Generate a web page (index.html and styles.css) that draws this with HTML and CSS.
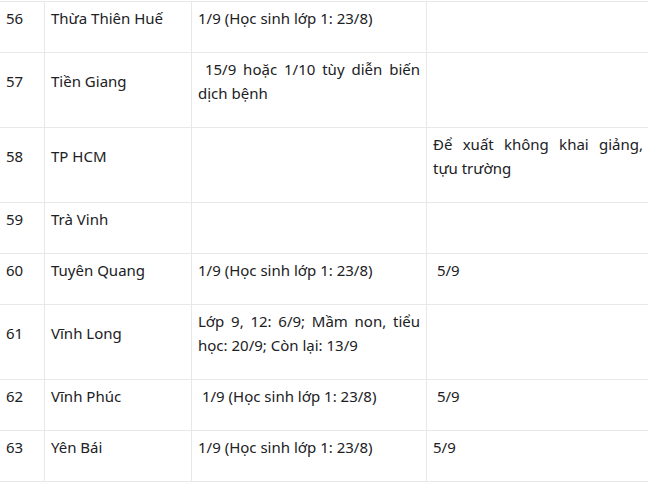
FILE: index.html
```html
<!DOCTYPE html>
<html lang="vi">
<head>
<meta charset="utf-8">
<link rel="stylesheet" href="styles.css">
</head>
<body>
<table class="schedule">
  <colgroup>
    <col class="c-num">
    <col class="c-name">
    <col class="c-date">
    <col class="c-note">
  </colgroup>
  <tbody>
    <tr><td>56</td><td>Thừa Thiên Huế</td><td>1/9 (Học sinh lớp 1: 23/8)</td><td></td></tr>
    <tr><td class="mid">57</td><td class="mid">Tiền Giang</td><td>&nbsp;15/9 hoặc 1/10 tùy diễn biến dịch bệnh</td><td></td></tr>
    <tr><td class="mid">58</td><td class="mid">TP HCM</td><td></td><td>Để xuất không khai giảng, tựu trường</td></tr>
    <tr><td>59</td><td>Trà Vinh</td><td></td><td></td></tr>
    <tr><td>60</td><td>Tuyên Quang</td><td>1/9 (Học sinh lớp 1: 23/8)</td><td>&nbsp;5/9</td></tr>
    <tr><td class="mid">61</td><td class="mid">Vĩnh Long</td><td>Lớp 9, 12: 6/9; Mầm non, tiểu học: 20/9; Còn lại: 13/9</td><td></td></tr>
    <tr><td>62</td><td>Vĩnh Phúc</td><td>&nbsp;1/9 (Học sinh lớp 1: 23/8)</td><td>&nbsp;5/9</td></tr>
    <tr><td>63</td><td>Yên Bái</td><td>1/9 (Học sinh lớp 1: 23/8)</td><td>5/9</td></tr>
  </tbody>
</table>
</body>
</html>
```
FILE: styles.css
```css
html, body {
  margin: 0;
  padding: 0;
  background: #ffffff;
}
body {
  overflow: hidden;
}
.schedule {
  border-collapse: collapse;
  table-layout: fixed;
  width: 650px;
  margin: 1px 0 0 -1px;
  font-family: "Noto Sans", Roboto, Arial, sans-serif;
  font-size: 15px;
  line-height: 24px;
  color: #202124;
}
.c-num { width: 45px; }
.c-name { width: 147px; }
.c-date { width: 235px; }
.c-note { width: 223px; }
.schedule td {
  border: 1px solid #e8e8e8;
  padding: 4px 6px 22px 6px;
  vertical-align: top;
  text-align: justify;
}
.schedule td.mid {
  vertical-align: middle;
}
```
